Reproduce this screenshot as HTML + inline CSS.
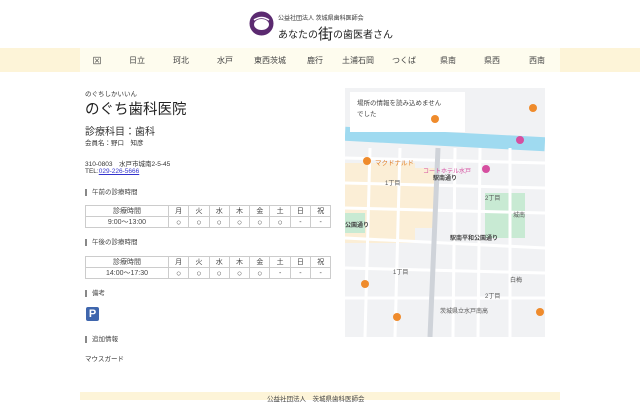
<!DOCTYPE html>
<html><head><meta charset="utf-8"><style>
*{margin:0;padding:0;box-sizing:border-box}
body{width:640px;height:400px;overflow:hidden;background:#fff;font-family:"Liberation Sans","Noto Sans CJK JP",sans-serif;color:#333;position:relative}
.abs{position:absolute;white-space:nowrap}
.nav{position:absolute;left:0;top:48px;width:640px;height:24px;background:#fdf4d8}
.navin{position:absolute;left:80px;top:0;width:480px;height:24px;background:#fefcee}
.nav span{position:absolute;top:7px;font-size:8px;color:#444;transform:translateX(-50%)}
table{border-collapse:collapse;position:absolute;left:85px;font-size:7px;color:#444}
td{border:1px solid #ccc;height:11px;text-align:center;width:20.3px;line-height:9px;padding:0}
td.f{width:83px}
td.c{font-size:8.5px}
.h{position:absolute;left:85px;font-size:6.5px;color:#444;border-left:2px solid #888;padding-left:5px;line-height:7px}
</style></head><body>
<svg class="abs" style="left:249px;top:11px" width="25" height="25"><circle cx="12.5" cy="12.5" r="12" fill="#5b2a70"/><ellipse cx="12.5" cy="13.5" rx="7.5" ry="5.5" fill="#fff"/><path d="M5 9 Q12.5 4 20 9" stroke="#fff" stroke-width="1.5" fill="none"/></svg>
<div class="abs" style="left:278px;top:13px;font-size:6px;color:#333">公益社団法人 茨城県歯科医師会</div>
<div class="abs" style="left:278px;top:22px;font-size:10px;color:#222">あなたの<span style="font-size:15px;position:relative;top:1px">街</span>の歯医者さん</div>
<div class="nav"><div class="navin"></div>
<span style="left:97px;font-size:9px;top:6px">⊠</span><span style="left:137px">日立</span><span style="left:181px">珂北</span><span style="left:225px">水戸</span><span style="left:270px">東西茨城</span><span style="left:315px">鹿行</span><span style="left:358px">土浦石岡</span><span style="left:404px">つくば</span><span style="left:448px">県南</span><span style="left:492px">県西</span><span style="left:537px">西南</span></div>
<div class="abs" style="left:85px;top:88px;font-size:6.5px">のぐちしかいいん</div>
<div class="abs" style="left:85px;top:98px;font-size:14.5px;color:#222">のぐち歯科医院</div>
<div class="abs" style="left:85px;top:123px;font-size:10px;color:#333">診療科目：歯科</div>
<div class="abs" style="left:85px;top:137px;font-size:6.5px">会員名：野口　知彦</div>
<div class="abs" style="left:85px;top:158px;font-size:6.5px">310-0803　水戸市城南2-5-45</div>
<div class="abs" style="left:85px;top:168px;font-size:6.5px">TEL:<span style="color:#33c;text-decoration:underline">029-226-5666</span></div>
<div class="h" style="top:189px">午前の診療時間</div>
<table style="top:205px"><tr><td class="f">診療時間</td><td>月</td><td>火</td><td>水</td><td>木</td><td>金</td><td>土</td><td>日</td><td>祝</td></tr>
<tr><td class="f">9:00～13:00</td><td class="c">○</td><td class="c">○</td><td class="c">○</td><td class="c">○</td><td class="c">○</td><td class="c">○</td><td>-</td><td>-</td></tr></table>
<div class="h" style="top:239px">午後の診療時間</div>
<table style="top:256px"><tr><td class="f">診療時間</td><td>月</td><td>火</td><td>水</td><td>木</td><td>金</td><td>土</td><td>日</td><td>祝</td></tr>
<tr><td class="f">14:00～17:30</td><td class="c">○</td><td class="c">○</td><td class="c">○</td><td class="c">○</td><td class="c">○</td><td>-</td><td>-</td><td>-</td></tr></table>
<div class="h" style="top:290px">備考</div>
<div class="abs" style="left:86px;top:307px;width:13px;height:14px;background:#3f66ad;border-radius:2px;color:#fff;font-weight:bold;font-size:11px;text-align:center;line-height:14px">P</div>
<div class="h" style="top:336px">追加情報</div>
<div class="abs" style="left:85px;top:353px;font-size:6.5px">マウスガード</div>
<svg class="abs" style="left:345px;top:88px" width="200" height="249">
<rect width="200" height="249" fill="#f1f2f4"/>
<g fill="#fbeed6"><rect x="0" y="75" width="70" height="80"/><rect x="70" y="80" width="20" height="60"/></g>
<rect x="0" y="44" width="200" height="14" fill="#9fdaf0" transform="rotate(3 100 50)"/>
<rect x="140" y="105" width="40" height="45" fill="#c8ead3"/>
<rect x="0" y="125" width="20" height="20" fill="#c8ead3"/>
<g stroke="#fff" stroke-width="3"><line x1="0" y1="70" x2="200" y2="75"/><line x1="0" y1="95" x2="200" y2="100"/><line x1="0" y1="120" x2="200" y2="125"/><line x1="0" y1="150" x2="200" y2="160"/><line x1="0" y1="180" x2="200" y2="185"/><line x1="0" y1="210" x2="200" y2="210"/><line x1="25" y1="60" x2="20" y2="249"/><line x1="55" y1="60" x2="50" y2="249"/><line x1="110" y1="60" x2="108" y2="249"/><line x1="135" y1="60" x2="133" y2="249"/><line x1="165" y1="60" x2="165" y2="249"/></g>
<line x1="93" y1="60" x2="85" y2="249" stroke="#cfd3d9" stroke-width="5"/>
<rect x="5" y="4" width="115" height="40" fill="#fff"/>
<text x="12" y="17" font-size="6.5" fill="#444">場所の情報を読み込めません</text>
<text x="12" y="28" font-size="6.5" fill="#444">でした</text>
<g font-size="6" fill="#555"><text x="40" y="97">1丁目</text><text x="140" y="112">2丁目</text><text x="168" y="129">城南</text><text x="48" y="186">1丁目</text><text x="140" y="210">2丁目</text><text x="165" y="194">白梅</text><text x="95" y="225">茨城県立水戸南高</text></g>
<g font-size="6" fill="#444" font-weight="bold"><text x="88" y="92">駅南通り</text><text x="105" y="152">駅南平和公園通り</text><text x="0" y="139">公園通り</text></g>
<text x="30" y="77" font-size="6.5" fill="#e0802a">マクドナルド</text>
<text x="78" y="85" font-size="6" fill="#d64fa0">コートホテル水戸</text>
<g fill="#ef8b2c"><circle cx="22" cy="73" r="4"/><circle cx="90" cy="31" r="4"/><circle cx="188" cy="20" r="4"/><circle cx="20" cy="196" r="4"/><circle cx="52" cy="229" r="4"/><circle cx="195" cy="224" r="4"/></g>
<circle cx="141" cy="81" r="4" fill="#d64fa0"/><circle cx="175" cy="52" r="4" fill="#d64fa0"/>
</svg>
<div class="abs" style="left:80px;top:392px;width:480px;height:8px;background:#fdf4d8"></div>
<div class="abs" style="left:267px;top:393px;font-size:6.5px;color:#444">公益社団法人　茨城県歯科医師会</div>
</body></html>
